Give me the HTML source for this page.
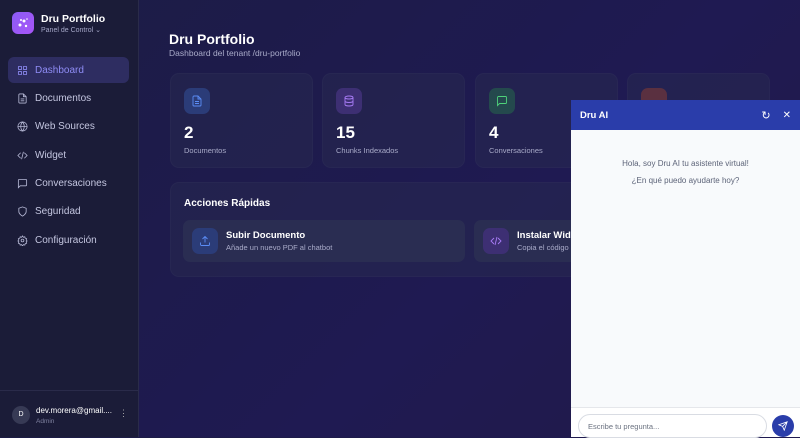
<!DOCTYPE html>
<html><head><meta charset="utf-8"><style>
*{box-sizing:border-box;margin:0;padding:0}
body{width:800px;height:437px;overflow:hidden;font-family:"Liberation Sans",sans-serif;background:linear-gradient(135deg,#1c1c45 0%,#1f1a52 60%,#221a48 100%);position:relative;color:#fff}
.sb{position:absolute;left:0;top:0;width:139px;height:437px;background:#1b1c38;border-right:1px solid #2a2b4a}
.logo{position:absolute;left:12px;top:12px;width:22px;height:22px;border-radius:6px;background:linear-gradient(135deg,#8b5cf6,#a855f7)}
.t1{position:absolute;left:41px;top:13px;font-size:10.5px;font-weight:bold}
.t2{position:absolute;left:41px;top:26px;font-size:7px;color:#a5a7c8}
.nav{position:absolute;left:8px;width:121px;height:26px;display:flex;align-items:center;padding-left:9px;font-size:10px;color:#c4c6e0;border-radius:6px}
.nav svg{width:11px;height:11px;margin-right:7px;stroke:#b5b7d4;fill:none;stroke-width:1.8}
.nav.act{background:#2e2d61;color:#8f8cf5}
.nav.act svg{stroke:#8f8cf5}
.user{position:absolute;left:0;top:390px;width:139px;border-top:1px solid #2a2b4a;height:47px}
.av{position:absolute;left:12px;top:15px;width:18px;height:18px;border-radius:50%;background:#373a55;font-size:7px;text-align:center;line-height:18px}
.card{position:absolute;background:rgba(40,42,80,.5);border:1px solid rgba(255,255,255,.025);border-radius:9px}
.ic{position:absolute;left:13px;top:14px;width:26px;height:26px;border-radius:7px;display:flex;align-items:center;justify-content:center}
.ic svg{width:12px;height:12px;fill:none;stroke-width:1.8}
.num{position:absolute;left:13px;top:49px;font-size:17px;font-weight:bold}
.lab{position:absolute;left:13px;top:72px;font-size:7.5px;color:#a9abc9}
.act2{position:absolute;background:#2a2d52;border-radius:7px;height:42px}
.chat{position:absolute;left:571px;top:100px;width:229px;height:337px;background:#f8fafc}
.ch{height:30px;background:#2a3daa;display:flex;align-items:center;padding:0 9px;font-size:9.5px;font-weight:bold}
</style></head><body>
<div class="sb">
<div class="logo"><svg viewBox="0 0 22 22" width="22" height="22"><g fill="#fff"><circle cx="8" cy="13" r="1.5"/><circle cx="12" cy="9" r="1.5"/><circle cx="14" cy="14" r="1.2"/><circle cx="9" cy="8" r="1"/><circle cx="15" cy="7" r="0.8"/></g></svg></div>
<div class="t1">Dru Portfolio</div><div class="t2">Panel de Control ⌄</div>
<div class="nav act" style="top:57px"><svg viewBox="0 0 24 24"><rect x="3" y="3" width="7" height="7" rx="1"/><rect x="14" y="3" width="7" height="7" rx="1"/><rect x="3" y="14" width="7" height="7" rx="1"/><rect x="14" y="14" width="7" height="7" rx="1"/></svg>Dashboard</div>
<div class="nav" style="top:85px"><svg viewBox="0 0 24 24"><path d="M14 2H6a2 2 0 0 0-2 2v16a2 2 0 0 0 2 2h12a2 2 0 0 0 2-2V8z"/><path d="M14 2v6h6M8 13h8M8 17h8"/></svg>Documentos</div>
<div class="nav" style="top:113px"><svg viewBox="0 0 24 24"><circle cx="12" cy="12" r="10"/><path d="M2 12h20M12 2a15 15 0 0 1 0 20M12 2a15 15 0 0 0 0 20"/></svg>Web Sources</div>
<div class="nav" style="top:142px"><svg viewBox="0 0 24 24"><path d="M16 18l6-6-6-6M8 6l-6 6 6 6M14 4l-4 16"/></svg>Widget</div>
<div class="nav" style="top:170px"><svg viewBox="0 0 24 24"><path d="M21 15a2 2 0 0 1-2 2H7l-4 4V5a2 2 0 0 1 2-2h14a2 2 0 0 1 2 2z"/></svg>Conversaciones</div>
<div class="nav" style="top:198px"><svg viewBox="0 0 24 24"><path d="M12 22s8-4 8-10V5l-8-3-8 3v7c0 6 8 10 8 10z"/></svg>Seguridad</div>
<div class="nav" style="top:227px"><svg viewBox="0 0 24 24"><circle cx="12" cy="12" r="3"/><path d="M12 2l2 3 3-1 1 3 3 1-1 3 2 2-2 2 1 3-3 1-1 3-3-1-2 3-2-3-3 1-1-3-3-1 1-3-2-2 2-2-1-3 3-1 1-3 3 1z"/></svg>Configuración</div>
<div class="user"><div class="av">D</div><div style="position:absolute;left:36px;top:15px;font-size:8px">dev.morera@gmail....</div><div style="position:absolute;left:36px;top:27px;font-size:6.5px;color:#7f819f">Admin</div><div style="position:absolute;left:119px;top:17px;font-size:9px;color:#aaa">⋮</div></div>
</div>
<div style="position:absolute;left:169px;top:31px;font-size:14px;font-weight:bold">Dru Portfolio</div>
<div style="position:absolute;left:169px;top:48px;font-size:8.5px;color:#a9abc9">Dashboard del tenant /dru-portfolio</div>
<div class="card" style="left:170px;top:73px;width:143px;height:95px"><div class="ic" style="background:#2b3c78"><svg viewBox="0 0 24 24" stroke="#5b8cf5"><path d="M14 2H6a2 2 0 0 0-2 2v16a2 2 0 0 0 2 2h12a2 2 0 0 0 2-2V8z"/><path d="M14 2v6h6M8 13h8M8 17h8"/></svg></div><div class="num">2</div><div class="lab">Documentos</div></div>
<div class="card" style="left:322px;top:73px;width:143px;height:95px"><div class="ic" style="background:#3d2f73"><svg viewBox="0 0 24 24" stroke="#a77bf5"><ellipse cx="12" cy="5" rx="8" ry="3"/><path d="M4 5v14c0 1.7 3.6 3 8 3s8-1.3 8-3V5M4 12c0 1.7 3.6 3 8 3s8-1.3 8-3"/></svg></div><div class="num">15</div><div class="lab">Chunks Indexados</div></div>
<div class="card" style="left:475px;top:73px;width:143px;height:95px"><div class="ic" style="background:#24494d"><svg viewBox="0 0 24 24" stroke="#4ed27a"><path d="M21 15a2 2 0 0 1-2 2H7l-4 4V5a2 2 0 0 1 2-2h14a2 2 0 0 1 2 2z"/></svg></div><div class="num">4</div><div class="lab">Conversaciones</div></div>
<div class="card" style="left:627px;top:73px;width:143px;height:95px"><div class="ic" style="background:#5a3040"></div></div>
<div class="card" style="left:170px;top:182px;width:600px;height:95px"><div style="position:absolute;left:13px;top:15px;font-size:10px;font-weight:bold">Acciones Rápidas</div></div>
<div class="act2" style="left:183px;top:220px;width:282px"><div class="ic" style="left:9px;top:8px;background:#2b3c78"><svg viewBox="0 0 24 24" stroke="#5b8cf5"><path d="M21 15v4a2 2 0 0 1-2 2H5a2 2 0 0 1-2-2v-4M17 8l-5-5-5 5M12 3v12"/></svg></div><div style="position:absolute;left:43px;top:10px;font-size:9.5px;font-weight:bold">Subir Documento</div><div style="position:absolute;left:43px;top:23px;font-size:7.5px;color:#a9abc9">Añade un nuevo PDF al chatbot</div></div>
<div class="act2" style="left:474px;top:220px;width:150px"><div class="ic" style="left:9px;top:8px;background:#3d2f73"><svg viewBox="0 0 24 24" stroke="#a77bf5"><path d="M16 18l6-6-6-6M8 6l-6 6 6 6M14 4l-4 16"/></svg></div><div style="position:absolute;left:43px;top:10px;font-size:9.5px;font-weight:bold">Instalar Widget</div><div style="position:absolute;left:43px;top:23px;font-size:7.5px;color:#a9abc9">Copia el código</div></div>
<div class="chat">
<div class="ch">Dru AI<span style="margin-left:auto;font-size:11px;font-weight:normal">↻</span><span style="margin-left:12px;font-size:10px;font-weight:normal">✕</span></div>
<div style="position:absolute;top:55px;width:229px;text-align:center;font-size:8px;color:#5c6378;line-height:17px">Hola, soy Dru AI tu asistente virtual!<br>¿En qué puedo ayudarte hoy?</div>
<div style="position:absolute;top:307px;left:0;width:229px;border-top:1px solid #e5e7eb;height:30px;background:#fff"></div>
<div style="position:absolute;left:7px;top:314px;width:189px;height:24px;border:1px solid #d9dce3;border-radius:12px;background:#fff;font-size:7.5px;color:#6b7280;padding:7px 9px">Escribe tu pregunta...</div>
<div style="position:absolute;left:201px;top:315px;width:22px;height:22px;border-radius:50%;background:#2a3daa;display:flex;align-items:center;justify-content:center"><svg width="10" height="10" viewBox="0 0 24 24" fill="none" stroke="#fff" stroke-width="2"><path d="M22 2L11 13M22 2l-7 20-4-9-9-4z"/></svg></div>
</div>
</body></html>
